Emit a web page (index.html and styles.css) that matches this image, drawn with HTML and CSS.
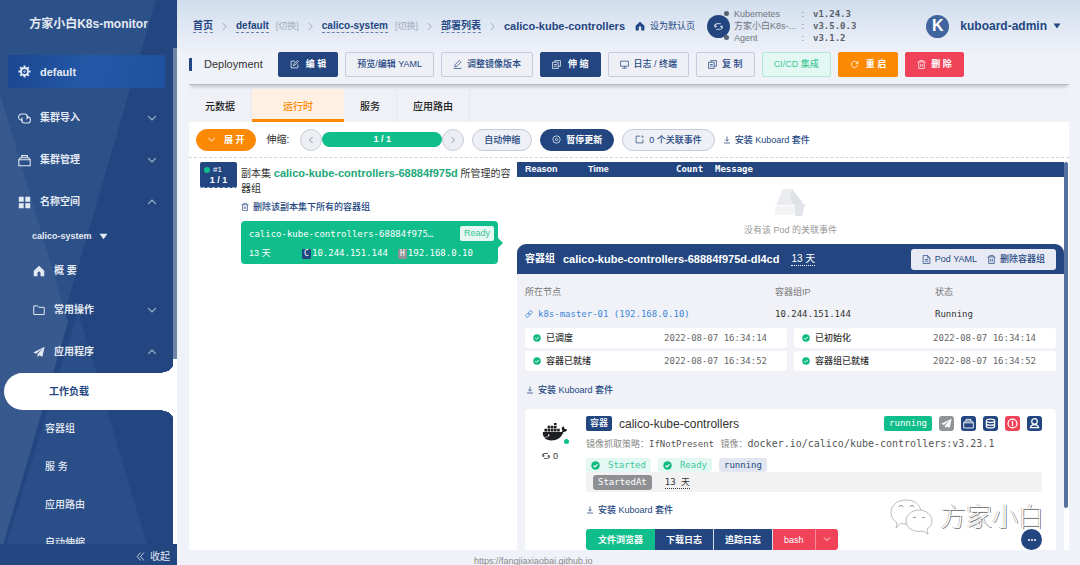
FILE: index.html
```html
<!DOCTYPE html>
<html lang="zh-CN">
<head>
<meta charset="utf-8">
<title>Kuboard</title>
<link rel="stylesheet" href="styles.css">
</head>
<body>
<svg class="sprite" aria-hidden="true">
  <symbol id="gear" viewBox="0 0 16 16"><g fill="none" stroke="currentColor"><circle cx="8" cy="8" r="4.4" stroke-width="2.4"/><circle cx="8" cy="8" r="1" stroke-width="1"/><path stroke-width="2.4" d="M8 .5v2.500M8 13v2.500M.5 8h2.500M13 8h2.500M2.700 2.700l1.800 1.800M11.500 11.500l1.800 1.800M2.700 13.300l1.800-1.800M11.500 4.500l1.800-1.800"/></g></symbol>
  <symbol id="link" viewBox="0 0 16 16"><g fill="none" stroke="currentColor" stroke-width="1.3"><path d="M6 10H4.500a3.800 3.800 0 0 1 0-7.600H8a3.800 3.800 0 0 1 2.500 6.700"/><path d="M10 6h1.500a3.800 3.800 0 0 1 0 7.600H8a3.800 3.800 0 0 1-2.500-6.700"/></g></symbol>
  <symbol id="chain" viewBox="0 0 16 16"><g fill="none" stroke="currentColor" stroke-width="1.500" transform="rotate(-45 8 8)"><rect x="0" y="5" width="9" height="6" rx="3"/><rect x="7" y="5" width="9" height="6" rx="3"/></g></symbol>
  <symbol id="box" viewBox="0 0 16 16"><path fill="none" stroke="currentColor" stroke-width="1.3" d="M1 7h14v7.500H1zM1 7l2-2.500h10L15 7M4.500 4.500V2h7v2.500"/></symbol>
  <symbol id="grid" viewBox="0 0 16 16"><path fill="currentColor" d="M1 1h6v6H1zM9 1h6v6H9zM1 9h6v6H1zM9 9h6v6H9z"/></symbol>
  <symbol id="home" viewBox="0 0 16 16"><path fill="currentColor" d="M8 1L1 7.500V15h5v-4.500a2 2 0 0 1 4 0V15h5V7.500z"/></symbol>
  <symbol id="folder" viewBox="0 0 16 16"><path fill="none" stroke="currentColor" stroke-width="1.300" d="M1 2.500h5l2 2h7v9.500H1z"/></symbol>
  <symbol id="plane" viewBox="0 0 16 16"><path fill="currentColor" d="M15.500 1L0.500 8.500l3.700 1.700L13 3 6 11v4l2.300-2.800 4.200 2z"/></symbol>
  <symbol id="down" viewBox="0 0 16 16"><path fill="none" stroke="currentColor" stroke-width="1.700" d="M2 5l6 6 6-6"/></symbol>
  <symbol id="up" viewBox="0 0 16 16"><path fill="none" stroke="currentColor" stroke-width="1.700" d="M2 11l6-6 6 6"/></symbol>
  <symbol id="left" viewBox="0 0 16 16"><path fill="none" stroke="currentColor" stroke-width="1.700" d="M11 2L5 8l6 6"/></symbol>
  <symbol id="right" viewBox="0 0 16 16"><path fill="none" stroke="currentColor" stroke-width="1.700" d="M5 2l6 6-6 6"/></symbol>
  <symbol id="fold" viewBox="0 0 16 16"><path fill="none" stroke="currentColor" stroke-width="1.500" d="M8 1L2 8l6 7M14 1L8 8l6 7"/></symbol>
  <symbol id="caret" viewBox="0 0 16 16"><path fill="currentColor" d="M1 3h14L8 13z"/></symbol>
  <symbol id="edit" viewBox="0 0 16 16"><path fill="none" stroke="currentColor" stroke-width="1.300" d="M9 2H2v12h12V8M6 10l1-3 6-6 2 2-6 6z"/></symbol>
  <symbol id="pen" viewBox="0 0 16 16"><path fill="none" stroke="currentColor" stroke-width="1.300" d="M3 12l1-4 7-7 3 3-7 7zM1 15h14"/></symbol>
  <symbol id="copy" viewBox="0 0 16 16"><path fill="none" stroke="currentColor" stroke-width="1.300" d="M5 1h10v10h-4M1 4h10v11H1zM3.500 8h5M3.500 11h5M5 1v3"/></symbol>
  <symbol id="screen" viewBox="0 0 16 16"><path fill="none" stroke="currentColor" stroke-width="1.300" d="M1 2h14v9H1zM4 14.500h8M8 11v3"/></symbol>
  <symbol id="reload" viewBox="0 0 16 16"><path fill="none" stroke="currentColor" stroke-width="1.400" d="M13.500 8a5.500 5.500 0 1 1-1.500-4L14 6M14 2v4h-4"/></symbol>
  <symbol id="sync" viewBox="0 0 16 16"><path fill="none" stroke="currentColor" stroke-width="1.600" d="M2 9.500V6a3 3 0 0 1 3-3h7M2 6l3-3M14 6.500V10a3 3 0 0 1-3 3H4M1 5l1 4 3.500-1.500M15 11l-1-4-3.500 1.500"/></symbol>
  <symbol id="trash" viewBox="0 0 16 16"><path fill="none" stroke="currentColor" stroke-width="1.300" d="M1 3.500h14M3 3.500V15h10V3.500M5 3V1h6v2M6.500 7v5M9.500 7v5"/></symbol>
  <symbol id="pause" viewBox="0 0 16 16"><g fill="none" stroke="currentColor" stroke-width="1.300"><circle cx="8" cy="8" r="6.500"/><circle cx="8" cy="8" r="2"/></g></symbol>
  <symbol id="event" viewBox="0 0 16 16"><path fill="none" stroke="currentColor" stroke-width="1.300" d="M9 2H2v12h12V8M11 2h3v3"/></symbol>
  <symbol id="install" viewBox="0 0 16 16"><path fill="none" stroke="currentColor" stroke-width="1.500" d="M8 1v9M4.500 7L8 10.500 11.500 7M2 14h12"/></symbol>
  <symbol id="doc" viewBox="0 0 16 16"><path fill="none" stroke="currentColor" stroke-width="1.300" d="M2 1h8l4 4v10H2zM10 1v4h4M5 8h6M5 11h6"/></symbol>
  <symbol id="check" viewBox="0 0 16 16"><circle cx="8" cy="8" r="7.500" fill="#10b981"/><path fill="none" stroke="#fff" stroke-width="2" d="M4.500 8.200L7 10.600l4.500-4.800"/></symbol>
  <symbol id="db" viewBox="0 0 16 16"><g fill="none" stroke="currentColor" stroke-width="1.800"><ellipse cx="8" cy="4" rx="6" ry="2.500"/><path d="M2 4v8c0 3.300 12 3.300 12 0V4M2 8c0 3.300 12 3.300 12 0"/></g></symbol>
  <symbol id="info" viewBox="0 0 16 16"><g fill="none" stroke="currentColor" stroke-width="1.800"><circle cx="8" cy="8" r="6.500"/><path d="M8 4v8"/></g></symbol>
  <symbol id="user" viewBox="0 0 16 16"><g fill="none" stroke="currentColor" stroke-width="1.800"><circle cx="8" cy="5" r="4"/><path d="M2 14c1-6 11-6 12 0z"/></g></symbol>
  <symbol id="docker" viewBox="0 0 48 36"><path fill="currentColor" d="M1 17h33c3 0 4-1 4-3-2-3-1-6 1-8 2 1 4 4 3 6 2-1 4 0 5 1-1 3-4 4-7 4-4 11-12 16-23 16C7 33 0 27 1 17zM4 11h5v5H4zM10 11h5v5h-5zM16 11h5v5h-5zM22 11h5v5h-5zM28 11h5v5h-5zM10 5h5v5h-5zM16 5h5v5h-5zM22 5h5v5h-5zM22 0h5v4h-5z"/><circle cx="12" cy="23" r="1.500" fill="#fff"/><path fill="none" stroke="#fff" d="M2 27c6 1 9-1 11-3"/></symbol>
  <symbol id="chat" viewBox="0 0 46 38"><g fill="#fff" stroke="#aaa" stroke-width=".8"><path d="M7 30l1-5C-3 17 2 2 17 2c9 0 14 5 15 11-8 0-15 5-14 13-3 0-5 0-6-1z"/><path d="M39 36l-5-3c-9 2-17-3-17-10 0-6 6-11 13-11s13 5 13 11c0 4-2 6-5 8z"/></g><g fill="none" stroke="#777"><path d="M10 9c1-2 3-2 4 0M21 9c1-2 3-2 4 0M24 20c1-1 2-1 3 0M33 20c1-1 2-1 3 0"/></g></symbol>
</svg>
<div class="app">
  <aside class="side">
    <svg class="side-art" viewBox="0 0 177 544" preserveAspectRatio="none" aria-hidden="true"><path fill="#2c5088" d="M0 0h156L62 310 0 530z"/><path fill="#37598e" d="M0 90L68 310 0 535z"/><path fill="#2c5088" d="M78 300l75 244H0z" opacity=".8"/></svg>
    <h1 class="brand">方家小白K8s-monitor</h1>
    <nav class="nav">
      <a class="cluster" href="#"><svg><use href="#gear"/></svg>default</a>
      <a class="item" href="#"><svg><use href="#link"/></svg>集群导入<svg class="arrow"><use href="#down"/></svg></a>
      <a class="item" href="#"><svg><use href="#box"/></svg>集群管理<svg class="arrow"><use href="#down"/></svg></a>
      <a class="item" href="#"><svg><use href="#grid"/></svg>名称空间<svg class="arrow"><use href="#up"/></svg></a>
      <a class="ns" href="#">calico-system<svg><use href="#caret"/></svg></a>
      <a class="item sub short" href="#"><svg><use href="#home"/></svg>概 要</a>
      <a class="item sub" href="#"><svg><use href="#folder"/></svg>常用操作<svg class="arrow"><use href="#down"/></svg></a>
      <a class="item sub" href="#"><svg><use href="#plane"/></svg>应用程序<svg class="arrow"><use href="#up"/></svg></a>
      <a class="leaf active" href="#">工作负载</a>
      <a class="leaf" href="#">容器组</a>
      <a class="leaf" href="#">服 务</a>
      <a class="leaf" href="#">应用路由</a>
      <a class="leaf" href="#">自动伸缩</a>
    </nav>
    <button class="collapse"><svg><use href="#fold"/></svg>收起</button>
  </aside>

  <main class="main">
    <header class="top">
      <nav class="crumbs">
        <a href="#">首页</a><svg><use href="#right"/></svg>
        <a href="#">default</a><a class="switch" href="#">[切换]</a><svg><use href="#right"/></svg>
        <a href="#">calico-system</a><a class="switch" href="#">[切换]</a><svg><use href="#right"/></svg>
        <a href="#">部署列表</a><svg><use href="#right"/></svg>
        <strong>calico-kube-controllers</strong>
      </nav>
      <a class="set-home" href="#"><svg><use href="#home"/></svg>设为默认页</a>
      <div class="versions">
        <button class="sync" aria-label="刷新"><svg><use href="#sync"/></svg></button>
        <dl>
          <dt>Kubernetes</dt><dd>v1.24.3</dd>
          <dt>方家小白K8s-...</dt><dd>v3.5.0.3</dd>
          <dt>Agent</dt><dd>v3.1.2</dd>
        </dl>
      </div>
      <button class="account"><span class="avatar">K</span>kuboard-admin<svg><use href="#caret"/></svg></button>
    </header>

    <div class="tools">
      <h2>Deployment</h2>
      <button class="btn navy"><svg><use href="#edit"/></svg>编 辑</button>
      <button class="btn">预览/编辑 YAML</button>
      <button class="btn"><svg><use href="#pen"/></svg>调整镜像版本</button>
      <button class="btn navy"><svg><use href="#copy"/></svg>伸 缩</button>
      <button class="btn"><svg><use href="#screen"/></svg>日志 / 终端</button>
      <button class="btn"><svg><use href="#copy"/></svg>复 制</button>
      <button class="btn mint">CI/CD 集成</button>
      <button class="btn orange"><svg><use href="#reload"/></svg>重 启</button>
      <button class="btn red"><svg><use href="#trash"/></svg>删 除</button>
    </div>

    <div class="tabs">
      <button>元数据</button>
      <button class="on">运行时</button>
      <button>服务</button>
      <button>应用路由</button>
    </div>

    <section class="sheet">
      <div class="controls">
        <button class="pill orange"><svg><use href="#down"/></svg>展 开</button>
        <span class="scale-label">伸缩:</span>
        <div class="scale">
          <button aria-label="减少"><svg><use href="#left"/></svg></button>
          <b>1 / 1</b>
          <button aria-label="增加"><svg><use href="#right"/></svg></button>
        </div>
        <button class="pill">自动伸缩</button>
        <button class="pill navy"><svg><use href="#pause"/></svg>暂停更新</button>
        <button class="pill wide"><svg><use href="#event"/></svg>0 个关联事件</button>
        <a class="install" href="#"><svg><use href="#install"/></svg>安装 Kuboard 套件</a>
      </div>

      <div class="split">
        <div class="replica">
          <div class="rs-badge"><span><i></i>#1</span><b>1 / 1</b></div>
          <div class="rs-body">
            <p>副本集 <b>calico-kube-controllers-68884f975d</b> 所管理的容器组</p>
            <a class="install" href="#"><svg><use href="#trash"/></svg>删除该副本集下所有的容器组</a>
            <article class="pod-card">
              <div class="pod-row"><span>calico-kube-controllers-68884f975…</span><em>Ready</em></div>
              <div class="pod-row ips"><span class="age">13 天</span><span><mark>C</mark>10.244.151.144</span><span><mark class="host">H</mark>192.168.0.10</span></div>
            </article>
          </div>
        </div>

        <div class="detail">
          <table class="events">
            <thead><tr><th class="c-reason">Reason</th><th class="c-time">Time</th><th class="c-count">Count</th><th>Message</th></tr></thead>
            <tbody><tr><td colspan="4">
              <svg class="empty" viewBox="0 0 32 28"><path fill="#ebecef" d="M8 1h9l6 8v8H1z"/><path fill="#dfe2e6" d="M17 1l11 14-8 3-5-7z"/><path fill="#f2f3f5" d="M0 18h22v9H0z"/><path fill="#e1e4e8" d="M20 16h10l-3 12h-7z"/></svg>
              没有该 Pod 的关联事件
            </td></tr></tbody>
          </table>

          <header class="pod-head">
            <h3>容器组</h3><h3>calico-kube-controllers-68884f975d-dl4cd</h3><span class="dotted">13 天</span>
            <div class="pod-actions"><button><svg><use href="#doc"/></svg>Pod YAML</button><button><svg><use href="#trash"/></svg>删除容器组</button></div>
          </header>
          <div class="pod-body">
            <dl class="facts">
              <div><dt>所在节点</dt><dd><a href="#"><svg><use href="#chain"/></svg>k8s-master-01 (192.168.0.10)</a></dd></div>
              <div><dt>容器组IP</dt><dd>10.244.151.144</dd></div>
              <div><dt>状态</dt><dd>Running</dd></div>
            </dl>
            <div class="conds">
              <div><svg><use href="#check"/></svg><b>已调度</b><time>2022-08-07 16:34:14</time></div>
              <div><svg><use href="#check"/></svg><b>已初始化</b><time>2022-08-07 16:34:14</time></div>
              <div><svg><use href="#check"/></svg><b>容器已就绪</b><time>2022-08-07 16:34:52</time></div>
              <div><svg><use href="#check"/></svg><b>容器组已就绪</b><time>2022-08-07 16:34:52</time></div>
            </div>
            <a class="install" href="#"><svg><use href="#install"/></svg>安装 Kuboard 套件</a>

            <article class="container">
              <div class="ship"><svg class="docker"><use href="#docker"/></svg><i></i><span><svg><use href="#sync"/></svg>0</span></div>
              <div class="c-body">
                <div class="c-title">
                  <span class="tag">容器</span><h4>calico-kube-controllers</h4>
                  <span class="state">running</span>
                  <button class="gray" aria-label="发送"><svg><use href="#plane"/></svg></button>
                  <button aria-label="资源"><svg><use href="#box"/></svg></button>
                  <button aria-label="存储"><svg><use href="#db"/></svg></button>
                  <button class="red" aria-label="信息"><svg><use href="#info"/></svg></button>
                  <button aria-label="用户"><svg><use href="#user"/></svg></button>
                </div>
                <p class="image">镜像抓取策略：<span>IfNotPresent</span> 镜像：<span class="uri">docker.io/calico/kube-controllers:v3.23.1</span></p>
                <div class="flags"><span class="ok"><svg><use href="#check"/></svg>Started</span><span class="ok"><svg><use href="#check"/></svg>Ready</span><span class="run">running</span></div>
                <div class="started"><span>StartedAt</span><span class="dotted">13 天</span></div>
                <a class="install" href="#"><svg><use href="#install"/></svg>安装 Kuboard 套件</a>
                <div class="actions"><button class="green">文件浏览器</button><button>下载日志</button><button>追踪日志</button><button class="red">bash</button><button class="red more" aria-label="更多终端"><svg><use href="#down"/></svg></button></div>
              </div>
              <div class="watermark"><svg><use href="#chat"/></svg>方家小白</div>
              <button class="fab" aria-label="更多"><i></i><i></i><i></i></button>
            </article>
          </div>
        </div>
        <div class="thumb"></div>
      </div>
    </section>
    <footer class="foot">https://fangjiaxiaobai.github.io</footer>
  </main>
</div>
</body>
</html>
```
FILE: styles.css
```css
:root {
  --navy: #234681;
  --green: #10be8c;
  --orange: #fb8904;
  --red: #f04359;
  --pale: #eef0f6;
  --mono: "DejaVu Sans Mono", "Noto Sans CJK SC", monospace;
}
* { box-sizing: border-box; margin: 0; padding: 0; }
body { font: 9px/14px "Liberation Sans", "Noto Sans CJK SC", sans-serif; color: #333; }
button { font: inherit; color: inherit; border: 0; background: none; }
a { color: var(--navy); text-decoration: none; }
svg { width: 9px; height: 9px; flex: none; }
.sprite { position: absolute; width: 0; height: 0; }
.app { display: flex; height: 100vh; overflow: hidden; background: linear-gradient(#d1deed, #f0f2f9 56px); }

.side { position: relative; width: 177px; flex: none; display: flex; flex-direction: column; background: var(--navy); color: #e4eaf3; }
.side a { color: inherit; }
.side-art { position: absolute; left: 0; top: 0; width: 100%; height: 100%; }
.side > :not(.side-art) { position: relative; }
.brand { font-size: 12px; line-height: 48px; height: 48px; text-align: center; font-weight: 600; }
.nav { flex: 1; overflow: hidden; padding-top: 7px; border-right: 4px solid #6f85a8; border-image: linear-gradient(#6f85a8 311px, #fff 311px) 1; border-width: 0 4px 0 0; font-size: 10px; font-weight: 600; }
.cluster { display: flex; align-items: center; gap: 9px; margin: 0 8px 9px; padding-left: 10px; height: 33px; background: linear-gradient(100deg, #1b4690, #2458a6 50%, #20519f); font-size: 11px; border-radius: 2px; }
.cluster svg, .item svg { width: 13px; height: 13px; }
.item { display: flex; align-items: center; gap: 9px; height: 42px; padding: 0 16px 0 18px; }
.item .arrow { width: 10px; height: 10px; margin-left: auto; opacity: .7; }
.sub { padding-left: 33px; }
.sub svg { width: 12px; height: 12px; }
.short { height: 36px; }
.ns { display: flex; align-items: center; gap: 7px; height: 30px; padding: 0 0 4px 32px; font-size: 9px; }
.ns svg { width: 9px; height: 9px; }
.leaf { display: block; height: 38px; line-height: 38px; padding-left: 45px; font-weight: 500; }
.leaf.active { position: relative; height: 37px; line-height: 37px; margin: 0 0 0 4px; background: #fff; color: var(--navy); border-radius: 19px 0 0 19px; font-weight: 600; }
.side .active { color: var(--navy); }
.leaf.active::before, .leaf.active::after { content: ""; position: absolute; right: 0; width: 15px; height: 8px; }
.leaf.active::before { top: -8px; background: radial-gradient(ellipse 15px 8px at 0 0, transparent 98%, #fff); }
.leaf.active::after { bottom: -8px; background: radial-gradient(ellipse 15px 8px at 0 100%, transparent 98%, #fff); }
.collapse { height: 21px; display: flex; align-items: center; justify-content: flex-end; gap: 5px; padding: 4px 7px 0 0; background: var(--navy); font-size: 10px; }

.main { flex: 1; min-width: 0; display: flex; flex-direction: column; padding: 0 11px 0 12px; overflow: hidden; }
.top { display: flex; align-items: center; height: 52px; flex: none; padding: 0 8px 0 4px; color: var(--navy); }
.crumbs { display: flex; align-items: center; gap: 7px; font-size: 10px; line-height: 13px; font-weight: 600; white-space: nowrap; }
.crumbs a { border-bottom: 1px dashed #6a80a8; }
.crumbs .switch { border: 0; font-size: 9px; font-weight: 400; color: #a3acbc; }
.crumbs svg { color: #9aa3b3; }
.crumbs strong { font-size: 11px; }
.set-home { display: flex; align-items: center; gap: 5px; margin-left: 10px; }
.set-home svg { width: 10px; height: 10px; }
.versions { display: flex; align-items: center; gap: 4px; margin-left: 12px; color: #70757f; }
.sync { position: relative; display: grid; place-items: center; width: 23px; height: 23px; border-radius: 50%; background: var(--navy); color: #dfe7f4; }
.sync::before, .sync::after { content: ""; position: absolute; right: 1px; width: 5px; height: 5px; border-radius: 50%; background: #5a6270; }
.sync::before { top: -4px; }
.sync::after { bottom: -2px; }
.versions dl { display: grid; grid-template-columns: auto auto; line-height: 12px; }
.versions dt { display: flex; gap: 3px; width: 70px; white-space: nowrap; }
.versions dt::after { content: ":"; margin-left: auto; }
.versions dd { padding-left: 9px; font: bold 9px/12px var(--mono); color: #59606c; }
.account { display: flex; align-items: center; margin-left: auto; font-size: 12px; font-weight: 600; }
.avatar { display: grid; place-items: center; width: 23px; height: 23px; margin-right: 11px; border-radius: 50%; background: #41659f; color: #fff; font-size: 16px; }
.account svg { width: 8px; height: 8px; margin-left: 6px; }

.tools { display: flex; align-items: center; gap: 7px; height: 33px; flex: none; padding-bottom: 8px; border-bottom: 1px solid #b9bbc2; box-shadow: 0 4px 3px -2px #c4c6ce; position: relative; }
.tools h2 { margin-right: 8px; padding-left: 12px; border-left: 3px solid var(--navy); border-radius: 1px; font-size: 11px; line-height: 13px; font-weight: 400; }
.btn { display: flex; align-items: center; gap: 5px; height: 25px; padding: 0 11px; border: 1px solid #c5cbdc; border-radius: 2px; background: var(--pale); color: var(--navy); white-space: nowrap; font-weight: 500; }
.btn.navy, .btn.orange { gap: 7px; }
.btn.navy, .pill.navy { background: var(--navy); border-color: var(--navy); color: #fff; font-weight: 600; }
.btn.orange, .pill.orange { background: var(--orange); border-color: var(--orange); color: #fff; font-weight: 600; }
.btn.red { background: var(--red); border-color: var(--red); color: #fff; font-weight: 600; }
.btn.mint { background: #e3f8f3; border-color: #b2e8d7; color: #42c99a; }

.tabs { display: flex; height: 37px; padding-top: 4px; flex: none; font-size: 10px; font-weight: 500; background: #eff1f6; }
.tabs button { padding: 3px 16px 0; border-right: 1px solid #e6e8ee; color: #222; }
.tabs .on { padding: 3px 31px 0; background: #fff0e2; color: var(--orange); border-right: 0; box-shadow: inset 0 -3px var(--orange); }

.sheet { flex: 1; min-height: 0; display: flex; flex-direction: column; background: #fff; }
.controls { display: flex; align-items: center; gap: 8px; height: 36px; flex: none; padding-left: 7px; border-bottom: 1px dashed #cfd4de; }
.pill { display: flex; align-items: center; gap: 5px; height: 22px; padding: 0 11px; border: 1px solid #c5cbdc; border-radius: 11px; background: var(--pale); color: var(--navy); font-weight: 500; white-space: nowrap; }
.pill.orange { gap: 8px; padding: 0 10px; }
.pill.wide { padding: 0 12px; }
.scale-label { font-size: 10px; margin: 0 3px; }
.scale { display: flex; align-items: center; }
.scale button { display: grid; place-items: center; width: 22px; height: 22px; border: 1px solid #c9cdd8; border-radius: 50%; background: #eceef4; color: #7f8796; }
.scale svg { width: 8px; height: 8px; }
.scale b { width: 120px; height: 15px; border-radius: 8px; background: var(--green); color: #fff; text-align: center; line-height: 15px; }
.install { display: inline-flex; align-items: center; gap: 4px; font-weight: 500; white-space: nowrap; }
.install svg { width: 8px; height: 8px; }

.split { flex: 1; min-height: 0; display: flex; padding: 4px 1px 0 11px; overflow: hidden; }
.replica { display: flex; align-items: flex-start; gap: 4px; width: 317px; flex: none; }
.rs-badge { width: 37px; height: 26px; padding: 2px 4px; border-bottom: 1px dashed #9fb2d2; background: var(--navy); color: #fff; font-size: 8px; line-height: 11px; border-radius: 2px; }
.rs-badge span { display: flex; align-items: center; gap: 3px; }
.rs-badge i { width: 6px; height: 6px; border-radius: 50%; background: var(--green); }
.rs-badge b { display: block; text-align: center; font-size: 9px; }
.rs-body { width: 272px; padding-top: 4px; }
.rs-body p { font-size: 10px; line-height: 15px; margin-bottom: 4px; }
.rs-body p b { font-size: 11px; color: #21a878; }
.pod-card { position: relative; width: 257px; height: 43px; margin-top: 6px; padding: 5px 4px 0 8px; border-radius: 4px; background: var(--green); color: #fff; font-family: var(--mono); }
.pod-card::after { content: ""; position: absolute; right: -5px; top: 17px; border: 5px solid transparent; border-width: 5px 0 5px 5px; border-left-color: var(--green); }
.pod-row { display: flex; align-items: center; justify-content: space-between; height: 15px; }
.pod-row em { padding: 0 4px; background: #e7f8f3; color: #38c397; border-radius: 2px; font: 9px/15px "Liberation Sans", sans-serif; }
.ips { justify-content: flex-start; gap: 10px; margin-top: 4px; }
.ips .age { width: 43px; font-family: "Liberation Sans", "Noto Sans CJK SC", sans-serif; }
mark { display: inline-block; width: 9px; height: 10px; margin-right: 1px; background: var(--navy); color: #fff; font: 8px/10px var(--mono); text-align: center; border-radius: 1px; }
mark.host { background: #8f9299; }

.detail { flex: 1; min-width: 0; overflow: hidden; }
.events { width: 100%; border-collapse: collapse; table-layout: fixed; }
.events th { height: 15px; background: var(--navy); color: #fff; text-align: left; line-height: 15px; font-family: var(--mono); }
.events .c-reason, .events .c-time { font-family: inherit; }
.c-reason { width: 71px; padding-left: 8px; }
.c-time { width: 80px; }
.c-count { width: 47px; padding-left: 8px; }
.events td { height: 67px; text-align: center; color: #999; vertical-align: top; padding-top: 11px; }
.empty { display: block; width: 32px; height: 28px; margin: 0 auto 7px; }
.pod-head { display: flex; align-items: center; height: 30px; padding: 0 8px; background: var(--navy); color: #fff; border-radius: 9px 9px 0 0; }
.pod-head h3 { font-size: 10px; margin-right: 8px; white-space: nowrap; }
.pod-head h3 + h3 { margin-right: 12px; font-size: 11px; }
.pod-head .dotted { font-size: 10px; }
.dotted { border-bottom: 1px dotted currentColor; line-height: 12px; }
.pod-actions { display: flex; margin-left: auto; padding: 0 11px; gap: 10px; height: 21px; border-radius: 3px; background: #e7eaf4; color: var(--navy); font-weight: 500; }
.pod-actions button { display: flex; align-items: center; gap: 4px; white-space: nowrap; }
.pod-body { padding: 11px 8px 0; background: #f0f2f7; }
.facts { display: grid; grid-template-columns: 250fr 160fr 121fr; }
.facts dt { color: #777; }
.facts dd { margin: 8px 0 7px; font-family: var(--mono); }
.facts a { display: flex; align-items: center; gap: 5px; color: #4186d8; }
.facts svg { width: 8px; height: 8px; }
.conds { display: grid; grid-template-columns: 1fr 1fr; gap: 3px 7px; }
.conds div { display: flex; align-items: center; gap: 5px; height: 20px; padding: 0 20px 0 8px; border-radius: 3px; background: #fff; }
.conds b { font-weight: 500; }
.conds svg { width: 8px; height: 8px; }
.conds time { margin-left: auto; font-family: var(--mono); color: #666; }
.pod-body > .install { margin: 12px 0; padding-left: 1px; }
.container { position: relative; display: flex; padding: 7px 14px 7px 0; background: #fff; border-radius: 4px; }
.ship { position: relative; width: 61px; flex: none; padding: 7px 0 0 17px; }
.ship .docker { display: block; width: 26px; height: 19px; color: #1c1e22; }
.ship i { position: absolute; left: 39px; top: 23px; width: 5px; height: 5px; border-radius: 50%; background: var(--green); }
.ship span { display: flex; align-items: center; gap: 3px; margin-top: 7px; }
.ship span svg { width: 8px; height: 8px; }
.c-body { flex: 1; min-width: 0; }
.c-title { display: flex; align-items: center; gap: 7px; height: 15px; }
.tag { padding: 0 4px; line-height: 15px; border-radius: 2px; background: var(--navy); color: #fff; font-weight: 500; }
.c-title h4 { flex: 1; font-size: 12px; font-weight: 400; }
.state { padding: 0 5px; line-height: 15px; border-radius: 2px; background: var(--green); color: #fff; font-family: var(--mono); }
.c-title button { display: grid; place-items: center; width: 15px; height: 15px; border-radius: 3px; background: var(--navy); color: #fff; }
.c-title button.gray { background: #919497; }
.c-title button.red { background: var(--red); }
.c-title button svg { width: 11px; height: 11px; }
.image { margin: 6px 0 7px; color: #888; white-space: nowrap; }
.image span { margin-right: 4px; color: #555; font-family: var(--mono); }
.image .uri { font-size: 10px; }
.flags { display: flex; gap: 7px; font-family: var(--mono); }
.flags span { display: flex; align-items: center; gap: 8px; height: 14px; padding: 0 5px; border-radius: 3px; }
.flags .ok { background: #e3f8f2; color: #41c89d; }
.flags .run { background: #e2e6f1; color: var(--navy); }
.started { display: flex; align-items: center; gap: 13px; height: 20px; padding-left: 7px; margin-bottom: 11px; background: #f2f2f3; font-family: var(--mono); }
.started span:first-child { padding: 0 5px; line-height: 15px; border-radius: 3px; background: #8e9094; color: #fff; }
.actions { display: flex; margin-top: 11px; }
.actions button { height: 21px; padding: 0 11px; background: var(--navy); color: #fff; border-right: 1px solid #d8dfec; font-weight: 600; white-space: nowrap; }
.actions .green { padding: 0 12px; background: var(--green); border: 0; border-radius: 3px 0 0 3px; }
.actions .red { background: var(--red); font-weight: 500; border-color: #f68998; }
.actions .more { padding: 0 7px; border: 0; border-radius: 0 3px 3px 0; }
.actions svg { width: 8px; height: 8px; }
.watermark { position: absolute; right: 12px; bottom: 21px; display: flex; align-items: center; gap: 5px; font-size: 26px; line-height: 38px; font-weight: 100; color: #fff; text-shadow: 1px 1px 0 #666, -1px 0 0 #bbb; }
.watermark svg { width: 46px; height: 38px; }
.fab { position: absolute; right: 14px; bottom: 7px; display: flex; align-items: center; justify-content: center; gap: 1px; width: 21px; height: 21px; border-radius: 50%; background: var(--navy); }
.fab i { width: 2px; height: 2px; border-radius: 50%; background: #fff; }
.thumb { width: 4px; height: 346px; flex: none; border-radius: 2px; background: #54719f; }
.foot { flex: none; height: 15px; padding-top: 4px; overflow: hidden; padding-left: 285px; font-size: 9px; color: #888; }
```
